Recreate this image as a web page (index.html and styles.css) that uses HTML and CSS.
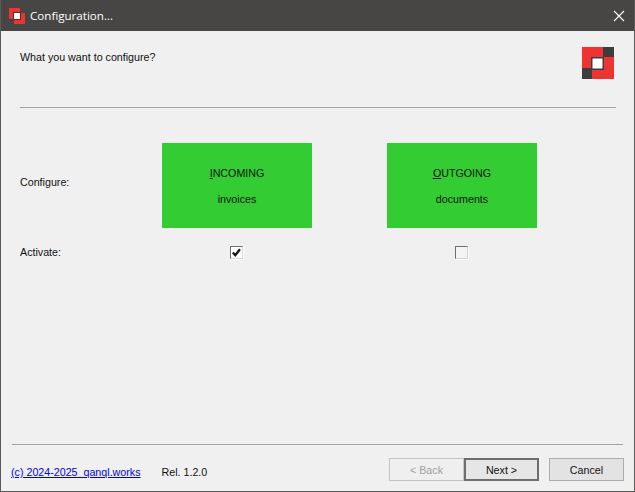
FILE: index.html
```html
<!DOCTYPE html>
<html lang="en">
<head>
<meta charset="utf-8">
<title>Configuration...</title>
<link rel="stylesheet" href="styles.css">
</head>
<body>
<div class="window">
  <header class="titlebar">
    <svg class="app-icon" width="16" height="16" viewBox="0 0 16 16">
      <rect x="0" y="0" width="11" height="11" fill="#ee3333"/>
      <rect x="5" y="5" width="11" height="11" fill="#ee3333"/>
      <rect x="4" y="4" width="8" height="8" fill="#5a2a2a"/>
      <rect x="5" y="5" width="6" height="6" fill="#ffffff"/>
    </svg>
    <span class="title">Configuration...</span>
    <svg class="close" width="12" height="12" viewBox="0 0 12 12">
      <path d="M1 1 L11 11 M11 1 L1 11" stroke="#ffffff" stroke-width="1.1" fill="none"/>
    </svg>
  </header>
  <main class="body">
    <section class="head">
      <p class="question">What you want to configure?</p>
      <svg class="logo" width="32" height="32" viewBox="0 0 32 32">
        <rect width="32" height="32" fill="#ee3333"/>
        <rect x="21" y="0" width="11" height="10" fill="#3d3d3d"/>
        <rect x="0" y="21" width="10" height="11" fill="#3d3d3d"/>
        <rect x="9" y="10" width="13" height="13" fill="#3d3d3d"/>
        <rect x="10.500" y="11.500" width="10" height="10" fill="#ffffff"/>
      </svg>
    </section>
    <hr class="rule rule-top">
    <section class="options">
      <span class="label label-config">Configure:</span>
      <button class="tile" type="button"><span><u>I</u>NCOMING</span><span>invoices</span></button>
      <button class="tile" type="button"><span><u>O</u>UTGOING</span><span>documents</span></button>
      <span class="label">Activate:</span>
      <span class="check-cell">
        <span class="check">
          <svg width="9" height="9" viewBox="0 0 9 9"><path d="M0.800 4.500 L3.300 7.200 L8 1.200" stroke="#111111" stroke-width="2.200" fill="none"/></svg>
        </span>
      </span>
      <span class="check-cell"><span class="check check-off"></span></span>
    </section>
    <hr class="rule rule-bottom">
    <footer class="footer">
      <a class="link" href="#">(c) 2024-2025&nbsp; qanql.works</a>
      <span class="rel">Rel. 1.2.0</span>
      <span class="buttons">
        <button class="btn" type="button" disabled>&lt; Back</button>
        <button class="btn default" type="button">Next &gt;</button>
        <button class="btn cancel" type="button">Cancel</button>
      </span>
    </footer>
  </main>
</div>
</body>
</html>
```

FILE: styles.css
```css
* { box-sizing: border-box; }
html, body { margin: 0; padding: 0; }
body {
  width: 635px;
  height: 492px;
  overflow: hidden;
  font-family: "Liberation Sans", Arial, sans-serif;
  font-size: 10.7px;
  color: #111111;
}
.window {
  width: 635px;
  height: 492px;
  display: flex;
  flex-direction: column;
  background: #f0f0f0;
  border: 1px solid #5a5a58;
  border-top: 0;
}
.titlebar {
  height: 31px;
  flex: none;
  display: flex;
  align-items: center;
  background: #484644;
  color: #ffffff;
  padding: 0 9px 0 8px;
}
.app-icon { flex: none; }
.title {
  margin-left: 5px;
  font-family: "Open Sans", "Noto Sans", sans-serif;
  font-size: 11.6px;
  flex: 1;
}
.close { flex: none; }
.body {
  flex: 1;
  display: flex;
  flex-direction: column;
}
.head {
  height: 76px;
  display: flex;
  justify-content: space-between;
  padding: 16px 20px 0 19px;
}
.question { margin: 3px 0 0; line-height: 14px; }
.rule {
  height: 1px;
  margin: 0;
  border: 0;
  background: #a0a0a0;
}
.rule-top { margin: 0 18px 0 19px; }
.options {
  margin-top: 35px;
  padding-left: 19px;
  display: grid;
  grid-template-columns: 142px 150px 75px 150px;
  grid-template-rows: 85px 48px;
}
.options .tile:nth-of-type(2) { margin: 0; grid-column: 4; }
.label { align-self: center; }
.label-config { margin-bottom: 8px; }
.tile {
  width: 150px;
  height: 85px;
  border: 0;
  padding: 0;
  background: #33cc33;
  color: #111111;
  font: inherit;
  display: flex;
  flex-direction: column;
  align-items: center;
  gap: 12px;
  padding-top: 23px;
  line-height: 14px;
}
.check-cell {
  display: flex;
  justify-content: center;
  align-items: center;
  padding-right: 1px;
}
.check-cell:last-child { grid-column: 4; }
.check {
  width: 13px;
  height: 13px;
  display: flex;
  align-items: center;
  justify-content: center;
  background: #ffffff;
  border: 1px solid #6e6e6e;
  border-right-color: #d8d8d8;
  border-bottom-color: #d8d8d8;
  box-shadow: 1px 1px 0 #ffffff;
}
.check-off { background: #f4f4f4; border-color: #6e6e6e #cfcfcf #cfcfcf #6e6e6e; }
.rule-bottom { margin: auto 11px 0; }
.footer {
  height: 46px;
  display: flex;
  align-items: flex-start;
  padding: 13px 10px 0 10px;
}
.link {
  color: #0000ee;
  margin-top: 7px;
  line-height: 14px;
}
.rel {
  margin-left: 21px;
  margin-top: 7px;
  line-height: 14px;
}
.buttons {
  margin-left: auto;
  display: flex;
}
.btn {
  width: 75px;
  height: 23px;
  padding: 0;
  font: inherit;
  color: #111111;
  background: #e3e3e3;
  border: 1px solid #adadad;
}
.btn:disabled {
  color: #a0a0a0;
  background: #efefef;
  border-color: #c4c4c4;
}
.default {
  border: 2px solid #6e6e6e;
  background: #e6e6e6;
}
.cancel { margin-left: 10px; }
```
